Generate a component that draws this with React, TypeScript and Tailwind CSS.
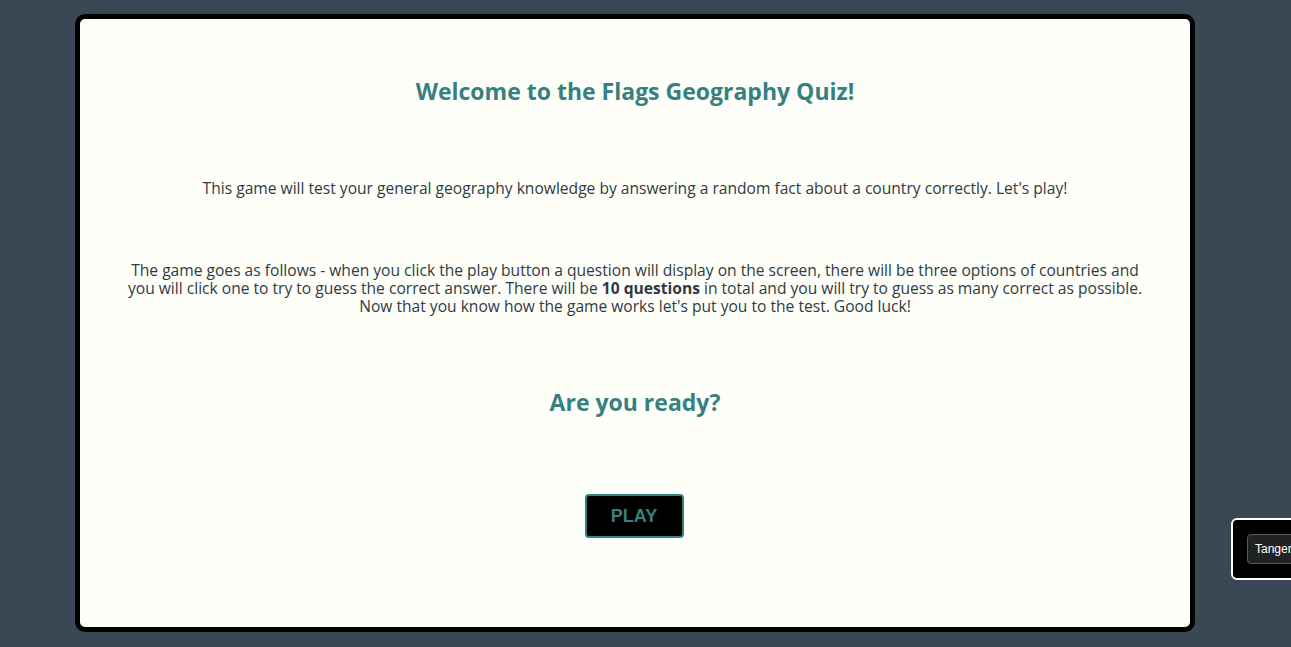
export default function App() {
  return (
    <div className="relative min-h-screen w-full overflow-hidden bg-[#394854] pt-[14px] pl-[75px] font-['Open_Sans',sans-serif]">
      <div className="flex h-[618px] w-[1120px] flex-col items-center rounded-[10px] border-[5px] border-black bg-[#fefff8] px-[46px] text-center text-[#2f3a44]">
        <h1 className="mt-[58px] text-[23px] font-bold leading-[28px] text-[#358080]">
          Welcome to the Flags Geography Quiz!
        </h1>
        <p className="mt-[74px] text-[15.6px] leading-[18px]">
          This game will test your general geography knowledge by answering a random fact about a country correctly. Let's play!
        </p>
        <p className="mt-[64px] text-[15.6px] leading-[18px]">
          The game goes as follows - when you click the play button a question will display on the screen, there will be three options of countries and you will click one to try to guess the correct answer. There will be <b>10 questions</b> in total and you will try to guess as many correct as possible. Now that you know how the game works let's put you to the test. Good luck!
        </p>
        <h2 className="mt-[73px] text-[23px] font-bold leading-[28px] text-[#358080]">Are you ready?</h2>
        <button className="mt-[78px] ml-[-2px] h-[44px] w-[99px] rounded-[4px] border-2 border-[#358080] bg-black font-['Liberation_Sans',sans-serif] text-[18px] font-bold text-[#358080]">
          PLAY
        </button>
      </div>

      <div className="absolute left-[1231px] top-[518px] flex h-[62px] w-[80px] items-center rounded-[6px] border-2 border-white bg-black pl-[14px]">
        <span className="rounded-[4px] border border-[#5a5a5a] bg-[#222] px-[7px] py-[6px] font-['Liberation_Sans',sans-serif] text-[12px] leading-[16px] text-white">
          Tangerine
        </span>
      </div>
    </div>
  );
}
